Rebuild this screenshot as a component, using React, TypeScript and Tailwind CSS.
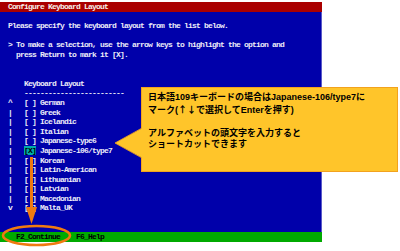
import React from "react";

const rows: (string | null)[] = [
  "",
  "  Please specify the keyboard layout from the list below.",
  "",
  "  > To make a selection, use the arrow keys to highlight the option and",
  "    press Return to mark it [X].",
  "",
  "",
  "      Keyboard Layout",
  "      -------------------------",
  "  ^   [ ] German",
  "  |   [ ] Greek",
  "  |   [ ] Icelandic",
  "  |   [ ] Italian",
  "  |   [ ] Japanese-type6",
  null,
  "  |   [ ] Korean",
  "  |   [ ] Latin-American",
  "  |   [ ] Lithuanian",
  "  |   [ ] Latvian",
  "  |   [ ] Macedonian",
  "  v   [ ] Malta_UK",
  "",
  "",
];

const mono =
  "font-['Liberation_Mono','DejaVu_Sans_Mono',monospace] text-[8px] tracking-[-0.8px] font-bold whitespace-pre";

export default function App() {
  return (
    <div className="relative w-[400px] h-[251px] bg-white overflow-hidden">
      <div className="pt-[2px] w-[322px]">
        <div className={`${mono} h-[9.6px] leading-[9.6px] bg-[#AA0000] text-[#F6F0EA]`}>
          {"  Configure Keyboard Layout"}
        </div>
        <div className="bg-[#0000AA] border-r border-[#5a5ac8]">
          {rows.map((r, i) =>
            r === null ? (
              <div key={i} className={`${mono} h-[9.6px] leading-[9.6px] text-[#ECECF8]`}>
                {"  |   "}
                <span className="bg-[#00AAAA] text-black">[X]</span>
                {" Japanese-106/type7"}
              </div>
            ) : (
              <div key={i} className={`${mono} h-[9.6px] leading-[9.6px] text-[#ECECF8]`}>
                {r}
              </div>
            )
          )}
        </div>
        <div className={`${mono} h-[9.6px] leading-[9.6px] bg-[#00AA00] text-black`}>
          {"    F2_Continue    F6_Help"}
        </div>
      </div>

      {/* callout */}
      <div className="absolute left-[141px] top-[87px] w-[257px] h-[85px] bg-[#FFC52A] border border-[#F2A21E] pl-[6px] pt-[4px] font-['Liberation_Sans','Noto_Sans_CJK_JP',sans-serif] font-bold text-[9px] leading-[11.5px] text-black">
        <div>日本語109キーボードの場合はJapanese-106/type7に</div>
        <div>
          マーク(
          <span className="font-['Noto_Sans_CJK_JP',sans-serif]">↑↓</span>
          で選択してEnterを押す)
        </div>
        <div className="h-[11.5px]" />
        <div>アルファベットの頭文字を入力すると</div>
        <div>ショートカットできます</div>
      </div>
      <svg className="absolute left-0 top-0" width="400" height="251" viewBox="0 0 400 251">
        <polygon points="142.5,128 115,143 142.5,158" fill="#FFC52A" />
        <line x1="142" y1="128" x2="115" y2="143" stroke="#F2A21E" strokeWidth="0.8" />
        <line x1="115" y1="143" x2="142" y2="158" stroke="#F2A21E" strokeWidth="0.8" />
        <line x1="31.5" y1="157" x2="31.5" y2="209" stroke="#F07A10" strokeWidth="3" />
        <polygon points="26,207 37,207 31.5,224" fill="#F07A10" />
        <ellipse cx="36.5" cy="235.5" rx="33.5" ry="9.5" fill="none" stroke="#F07A10" strokeWidth="2.6" />
      </svg>
    </div>
  );
}
